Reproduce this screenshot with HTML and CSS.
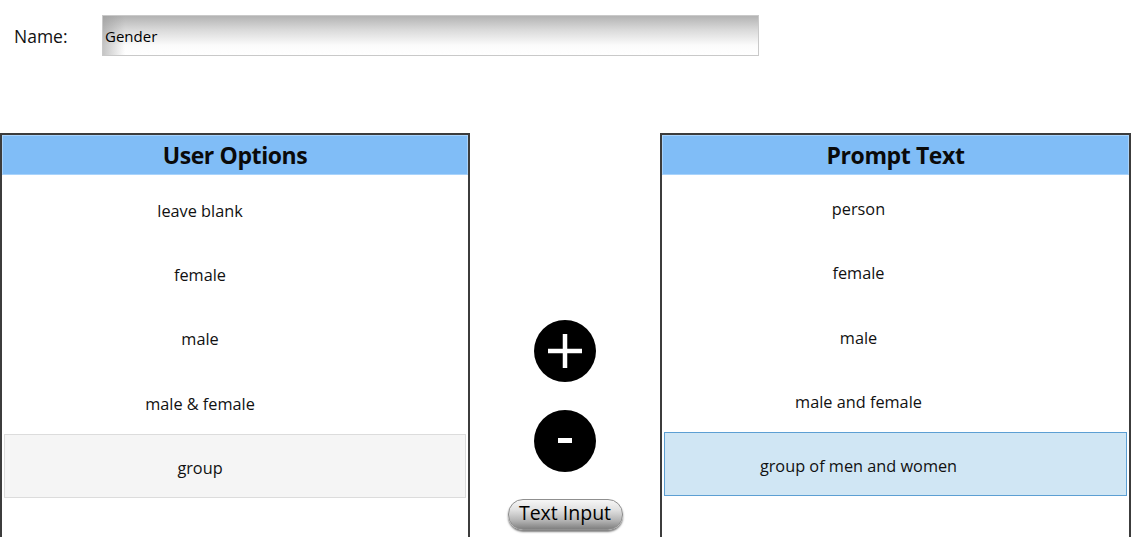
FILE: index.html
```html
<!DOCTYPE html>
<html>
<head>
<meta charset="utf-8">
<link rel="stylesheet" href="styles.css">
</head>
<body>
<div class="top">
  <span class="name-label">Name:</span>
  <div class="name-input">Gender</div>
</div>
<div class="main">
  <section class="panel panel-left">
    <div class="panel-head">User Options</div>
    <ul class="list">
      <li class="row">leave blank</li>
      <li class="row">female</li>
      <li class="row">male</li>
      <li class="row">male &amp; female</li>
      <li class="row row-hover">group</li>
    </ul>
  </section>
  <div class="middle">
    <button class="circle-btn" aria-label="add">
      <svg width="62" height="62" viewBox="0 0 62 62"><circle cx="31" cy="31" r="31" fill="#000"/><path d="M31 14v34M14 31h34" stroke="#fff" stroke-width="4.5" fill="none"/></svg>
    </button>
    <button class="circle-btn" aria-label="remove">
      <svg width="62" height="62" viewBox="0 0 62 62"><circle cx="31" cy="31" r="31" fill="#000"/><rect x="24" y="28" width="14" height="5" fill="#fff"/></svg>
    </button>
    <button class="text-btn">Text Input</button>
  </div>
  <section class="panel panel-right">
    <div class="panel-head">Prompt Text</div>
    <ul class="list list-right">
      <li class="row">person</li>
      <li class="row">female</li>
      <li class="row">male</li>
      <li class="row">male and female</li>
      <li class="row row-selected">group of men and women</li>
    </ul>
  </section>
</div>
</body>
</html>
```
FILE: styles.css
```css
html, body {
  margin: 0;
  padding: 0;
  background: #fff;
  font-family: "Open Sans", "Noto Sans", sans-serif;
  color: #111;
}
.top {
  display: flex;
  align-items: center;
  padding: 15px 0 0 14px;
  height: 41px;
}
.name-label {
  font-size: 17.5px;
  width: 88px;
}
.name-input {
  box-sizing: border-box;
  width: 657px;
  height: 41px;
  border: 1px solid #c9c9c9;
  padding-left: 2px;
  display: flex;
  align-items: center;
  font-size: 15px;
  color: #000;
  background:
    linear-gradient(to right, rgba(150,150,150,0.55), rgba(255,255,255,0) 22px),
    linear-gradient(to bottom, #b3b3b3 0%, #d9d9d9 35%, #fbfbfb 75%, #ffffff 100%);
}
.main {
  display: flex;
  margin-top: 77px;
  height: 404px;
}
.panel {
  box-sizing: border-box;
  border: 2px solid #3c3c3c;
  border-bottom: none;
  height: 404px;
  display: flex;
  flex-direction: column;
}
.panel-left { width: 470px; }
.panel-right { width: 471px; }
.panel-head {
  box-sizing: border-box;
  height: 40px;
  background: #80bdf7;
  border: 1px solid #a9d3fb;
  display: flex;
  align-items: center;
  justify-content: center;
  font-weight: 700;
  font-size: 23px;
  letter-spacing: -0.4px;
  color: #0a0a0a;
}
.list {
  list-style: none;
  margin: 0;
  padding: 2px 2px 0;
}
.list-right { padding-top: 0; }
.row {
  box-sizing: border-box;
  height: 64.3px;
  display: flex;
  align-items: center;
  justify-content: center;
  padding: 3px 70px 0 0;
  font-size: 16.3px;
  color: #111;
  border: 1px solid transparent;
}
.row-hover {
  background: #f5f5f5;
  border-color: #dcdcdc;
}
.row-selected {
  background: #d0e6f4;
  border-color: #5c9fd3;
}
.list-right .row { padding: 4px 74px 0 0; }
.middle {
  width: 190px;
  display: flex;
  flex-direction: column;
  align-items: center;
  padding-top: 187px;
  box-sizing: border-box;
}
.circle-btn {
  border: none;
  background: none;
  padding: 0;
  width: 62px;
  height: 62px;
  margin-bottom: 28px;
  display: block;
}
.circle-btn svg { display: block; }
.text-btn {
  margin-top: -1px;
  width: 115px;
  height: 31px;
  border-radius: 15px;
  border: 1px solid #8f8f8f;
  font-family: "Open Sans", sans-serif;
  font-size: 19.5px;
  line-height: 1;
  padding: 0 0 3px;
  color: #000;
  background: linear-gradient(to bottom, #f6f6f6 0%, #e0e0e0 35%, #b2b2b2 72%, #808080 100%);
  box-shadow: 0 2px 2px rgba(0,0,0,0.5);
}
```
